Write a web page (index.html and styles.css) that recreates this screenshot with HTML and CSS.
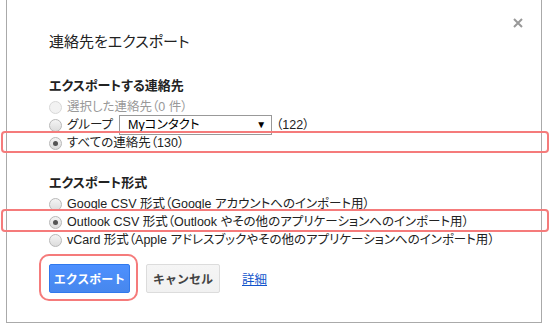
FILE: index.html
```html
<!DOCTYPE html>
<html lang="ja">
<head>
    <meta charset="UTF-8">
    <meta name="viewport" content="width=device-width, initial-scale=1.0">
    <title>連絡先をエクスポート</title>
    <link rel="stylesheet" href="styles.css">
</head>
<body>
    <div class="dialog">
        <svg class="close" width="10" height="10" viewBox="0 0 10 10">
            <path d="M1 1L9 9M9 1L1 9" stroke="#999" stroke-width="2"/>
        </svg>
        <h1 class="title">連絡先をエクスポート</h1>

        <h2 class="section">エクスポートする連絡先</h2>
        <div class="option disabled"><span class="radio"></span>選択した連絡先（0 件）</div>
        <div class="option"><span class="radio"></span>グループ<span class="select"><span>Myコンタクト</span><span class="arrow">▼</span></span>（122）</div>
        <div class="option"><span class="radio checked"></span>すべての連絡先（130）</div>

        <h2 class="section second">エクスポート形式</h2>
        <div class="option"><span class="radio"></span>Google CSV 形式（Google アカウントへのインポート用）</div>
        <div class="option"><span class="radio checked"></span>Outlook CSV 形式（Outlook やその他のアプリケーションへのインポート用）</div>
        <div class="option"><span class="radio"></span>vCard 形式（Apple アドレスブックやその他のアプリケーションへのインポート用）</div>

        <div class="actions">
            <button class="btn primary">エクスポート</button>
            <button class="btn">キャンセル</button>
            <a class="more" href="#">詳細</a>
        </div>
    </div>

    <!-- red annotation boxes -->
    <div class="mark mark-all"></div>
    <div class="mark mark-outlook"></div>
    <div class="mark mark-button"></div>
</body>
</html>
```

FILE: styles.css
```css
body {
    margin: 0;
    background: #fff;
    font-family: Arial, "Liberation Sans", "Noto Sans CJK JP", sans-serif;
    font-size: 12.5px;
    color: #222;
    font-feature-settings: "palt";
}
.dialog {
    position: relative;
    margin-left: 6px;
    width: 536px;
    height: 323px;
    border: 1px solid #aaa;
    border-top: none;
    padding: 32px 0 0 42px;
    box-sizing: border-box;
}
.close {
    position: absolute;
    top: 18px;
    right: 18px;
}
.title {
    margin: 0;
    font-size: 15px;
    font-weight: normal;
    line-height: 20px;
    color: #222;
}
.section {
    margin: 25px 0 3px;
    font-size: 13px;
    font-weight: bold;
    line-height: 18px;
    color: #222;
}
.section.second {
    margin-top: 22px;
}
.option {
    display: flex;
    align-items: center;
    height: 18px;
    line-height: 18px;
    white-space: nowrap;
}
.option.disabled {
    color: #999;
}
.radio {
    width: 11px;
    height: 11px;
    margin-right: 5px;
    border: 1px solid #b8b8b8;
    border-radius: 50%;
    background: linear-gradient(#f4f4f4, #dcdcdc);
    position: relative;
    flex: none;
}
.disabled .radio {
    border-color: #d8d8d8;
    background: #f2f2f2;
}
.radio.checked::after {
    content: "";
    position: absolute;
    left: 3px;
    top: 3px;
    width: 5px;
    height: 5px;
    border-radius: 50%;
    background: #555;
}
.select {
    display: inline-flex;
    justify-content: space-between;
    align-items: center;
    width: 153px;
    height: 20px;
    margin: 0 4px 0 6px;
    padding: 0 5px 0 8px;
    border: 1px solid #999;
    box-sizing: border-box;
    color: #000;
    background: #fff;
}
.arrow {
    font-size: 10px;
    color: #000;
}
.actions {
    display: flex;
    align-items: center;
    margin-top: 15px;
}
.btn {
    height: 29px;
    width: 74px;
    padding: 0;
    font-family: inherit;
    font-size: 12px;
    font-weight: bold;
    border-radius: 2px;
    border: 1px solid #dcdcdc;
    background: linear-gradient(#f5f5f5, #f1f1f1);
    color: #444;
    margin-right: 16px;
}
.btn.primary {
    width: 81px;
    border-color: #3079ed;
    background: linear-gradient(#4d90fe, #4787ed);
    color: #fff;
}
.more {
    margin-left: 6px;
    color: #15c;
    text-decoration: underline;
}
.mark {
    position: absolute;
    border: 2px solid #f57b7b;
    border-radius: 4px;
    box-sizing: border-box;
}
.mark-all {
    left: 1px;
    top: 131px;
    width: 548px;
    height: 22px;
}
.mark-outlook {
    left: 1px;
    top: 209px;
    width: 548px;
    height: 23px;
}
.mark-button {
    left: 39px;
    top: 254px;
    width: 99px;
    height: 47px;
    border-radius: 10px;
}
```
